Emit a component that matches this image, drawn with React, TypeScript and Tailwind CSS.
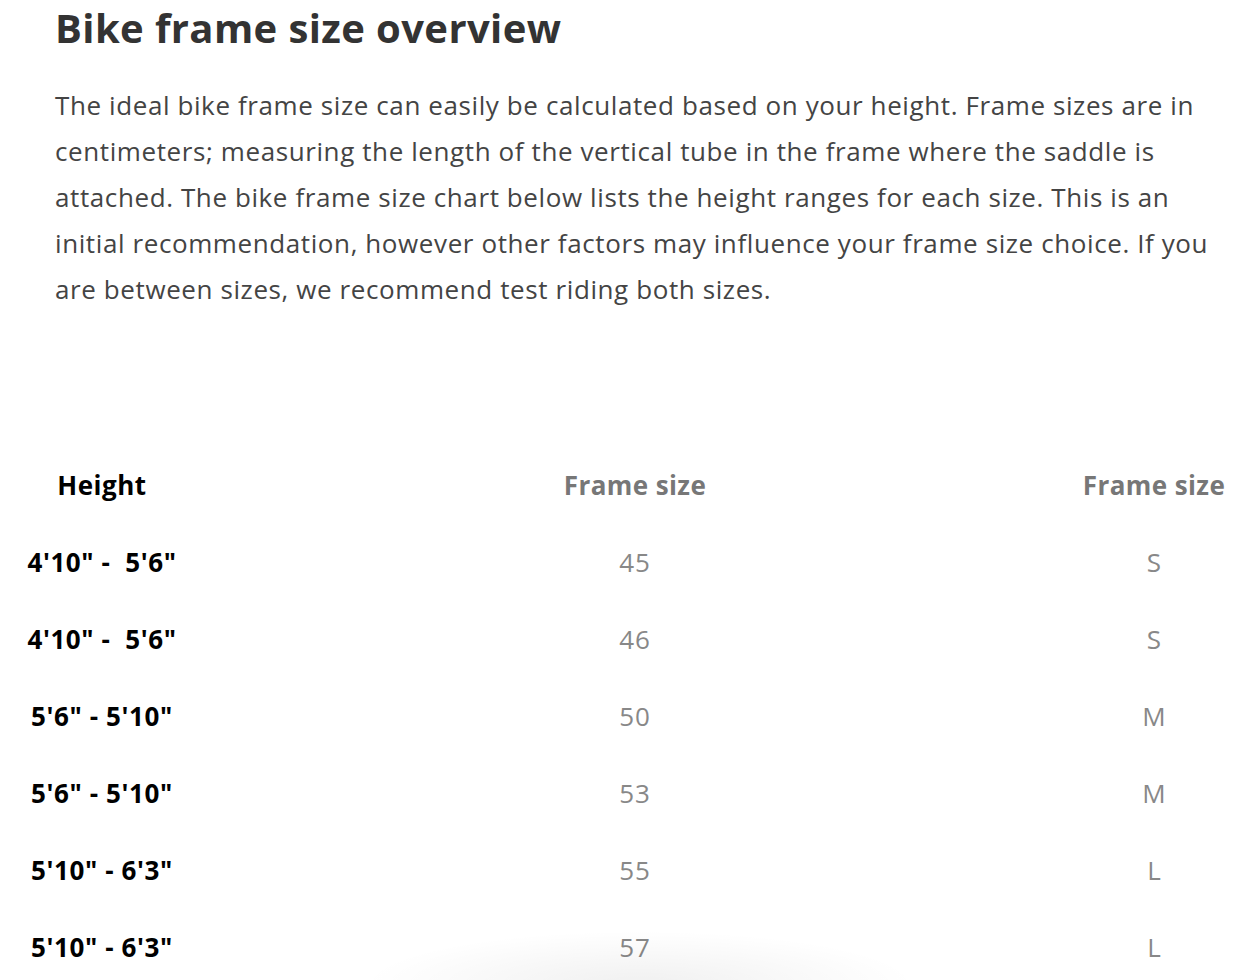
const rows = [
  { height: `4'10" -  5'6"`, frame: "45", size: "S" },
  { height: `4'10" -  5'6"`, frame: "46", size: "S" },
  { height: `5'6" - 5'10"`, frame: "50", size: "M" },
  { height: `5'6" - 5'10"`, frame: "53", size: "M" },
  { height: `5'10" - 6'3"`, frame: "55", size: "L" },
  { height: `5'10" - 6'3"`, frame: "57", size: "L" },
];

export default function App() {
  return (
    <div className="relative h-[980px] w-[1234px] overflow-hidden bg-white font-['Open_Sans',sans-serif]">
      <div className="pl-[55px] pr-[19px]">
        <h1 className="pt-[3px] text-[40px] font-bold leading-[50px] tracking-[0.4px] text-[#333]">
          Bike frame size overview
        </h1>
        <p className="mt-[29px] text-[26px] leading-[46px] tracking-[0.6px] text-[#444]">
          The ideal bike frame size can easily be calculated based on your height. Frame sizes are in
          centimeters; measuring the length of the vertical tube in the frame where the saddle is
          attached. The bike frame size chart below lists the height ranges for each size. This is an
          initial recommendation, however other factors may influence your frame size choice. If you
          are between sizes, we recommend test riding both sizes.
        </p>
      </div>

      <div className="mt-[154px] grid w-[1242px] grid-cols-[204px_862px_176px] text-[26px]">
        <div className="h-[77px] text-center font-bold tracking-[0.5px] text-black">Height</div>
        <div className="h-[77px] text-center font-bold tracking-[0.4px] text-[#777]">Frame size</div>
        <div className="h-[77px] text-center font-bold tracking-[0.4px] text-[#777]">Frame size</div>
        {rows.map((r, i) => (
          <div key={i} className="contents">
            <div className="h-[77px] whitespace-pre text-center font-bold tracking-[0.6px] text-black">{r.height}</div>
            <div className="h-[77px] text-center tracking-[1px] text-[#888]">{r.frame}</div>
            <div className="h-[77px] text-center text-[#888]">{r.size}</div>
          </div>
        ))}
      </div>

      <div className="pointer-events-none absolute bottom-[-60px] left-[360px] h-[110px] w-[560px] rounded-[50%] bg-[radial-gradient(ellipse_at_center,rgba(0,0,0,0.06),rgba(0,0,0,0)_70%)]" />
    </div>
  );
}
